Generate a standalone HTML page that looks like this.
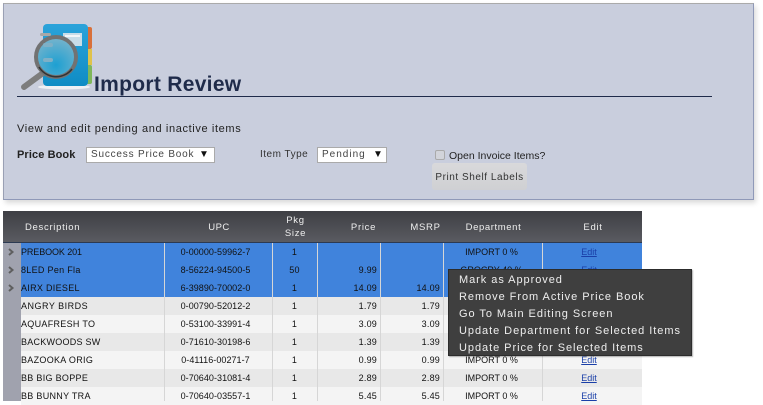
<!DOCTYPE html>
<html><head><meta charset="utf-8">
<style>
html,body{margin:0;padding:0;background:#fff;}
body{width:763px;height:401px;overflow:hidden;position:relative;font-family:"Liberation Sans",sans-serif;color:#111;}
.a{position:absolute;white-space:nowrap;}
#panel{left:3px;top:3px;width:749px;height:195px;background:#c9cedd;border:1px solid #8f99b8;border-top-color:#aaa;border-left-color:#9aa0b4;box-shadow:2px 3px 5px rgba(0,0,0,.15);}
.sel{background:#fff;border:1px solid #aaa;box-sizing:border-box;font-size:10px;letter-spacing:.8px;color:#444;line-height:14px;padding-left:4px;}
.th{color:#eee;font-size:9.5px;letter-spacing:.7px;text-align:center;}
.row{left:21px;width:621px;height:18px;}
.c{position:absolute;font-size:9px;letter-spacing:.3px;line-height:18px;color:#111;white-space:nowrap;top:0;}
.d{left:0;}
.u{left:141px;width:107px;text-align:center;letter-spacing:.05px;}
.p{left:251px;width:45px;text-align:center;}
.pr{left:297px;width:59px;text-align:right;letter-spacing:.2px;}
.m{left:360px;width:59px;text-align:right;letter-spacing:.2px;}
.de{left:421px;width:99px;text-align:center;letter-spacing:0;}
.e{left:520px;width:96px;text-align:center;color:#1a3fa8;text-decoration:underline;letter-spacing:0;}
.sep{position:absolute;top:243px;width:1px;height:158px;background:#d6d6d6;}
.menu{left:448px;top:269px;width:244px;height:87px;background:#3f3f3f;border:1px solid #2c2c2c;box-sizing:border-box;box-shadow:1px 1px 1px rgba(0,0,0,.3);}
.mi{position:absolute;left:10px;font-size:11px;letter-spacing:.95px;color:#eee;line-height:17px;white-space:nowrap;}
</style></head><body>
<div class="a" id="panel"></div>

<svg class="a" style="left:19px;top:22px" width="76" height="70" viewBox="0 0 76 70">
<defs>
<linearGradient id="bk" x1="0" y1="0" x2="0" y2="1"><stop offset="0" stop-color="#2ba3da"/><stop offset="1" stop-color="#0f8cc4"/></linearGradient>
<radialGradient id="gl" cx=".5" cy=".7" r=".7"><stop offset="0" stop-color="#1da0d2"/><stop offset="1" stop-color="#78b4cc"/></radialGradient>
</defs>
<ellipse cx="45" cy="65" rx="26" ry="2.5" fill="#eef0f4"/>
<rect x="66" y="5" width="7" height="22" rx="2" fill="#d8703a"/>
<rect x="66" y="27" width="7" height="16" fill="#dfc24a"/>
<rect x="66" y="43" width="7" height="19" rx="2" fill="#7fb75a"/>
<rect x="24" y="2" width="45" height="62" rx="4" fill="url(#bk)"/>
<rect x="44" y="11" width="19" height="13" fill="#c9dde8"/>
<rect x="46" y="13" width="15" height="2" fill="#f4f6f8"/>
<line x1="24" y1="51" x2="5" y2="65" stroke="#7d7d7d" stroke-width="6" stroke-linecap="round"/>
<circle cx="37" cy="35" r="20" fill="url(#gl)" stroke="#727272" stroke-width="4"/>
<path d="M20 45a20 20 0 0 0 33 2" fill="none" stroke="#333" stroke-width="1.5"/>
<rect x="24" y="21" width="10" height="4" rx="2" fill="#7fb0c6"/>
<rect x="24" y="36" width="10" height="4" rx="2" fill="#7fb0c6"/>
<rect x="21" y="11" width="11" height="3" rx="1.5" fill="#a8a8a8"/>
</svg>

<div class="a" style="left:94px;top:71px;font-size:21px;font-weight:bold;letter-spacing:.3px;color:#1f2b4a;line-height:27px;">Import Review</div>
<div class="a" style="left:17px;top:96px;width:695px;height:1px;background:#1f2b4a;"></div>

<div class="a" style="left:17px;top:122px;font-size:11px;letter-spacing:.63px;color:#222;line-height:14px;">View and edit pending and inactive items</div>
<div class="a" style="left:17px;top:148px;font-size:11px;font-weight:bold;letter-spacing:.1px;color:#222;line-height:14px;">Price Book</div>
<div class="a sel" style="left:86px;top:147px;width:129px;height:16px;">Success Price Book<span style="position:absolute;left:112px;top:0;color:#111;font-size:10px;letter-spacing:0">▼</span></div>
<div class="a" style="left:260px;top:148px;font-size:10px;letter-spacing:.5px;color:#333;line-height:14px;">Item Type</div>
<div class="a sel" style="left:317px;top:147px;width:70px;height:16px;letter-spacing:1px;">Pending<span style="position:absolute;left:55px;top:0;color:#111;font-size:10px;letter-spacing:0">▼</span></div>
<div class="a" style="left:435px;top:150px;width:8px;height:8px;background:#d2d4da;border:1px solid #aaa;border-radius:2px;"></div>
<div class="a" style="left:449px;top:149px;font-size:10.5px;letter-spacing:0;color:#222;line-height:14px;">Open Invoice Items?</div>
<div class="a" style="left:432px;top:163px;width:95px;height:27px;background:linear-gradient(#d9d9db,#cfd0d3);border-radius:3px;font-size:10px;letter-spacing:.55px;color:#333;line-height:29px;text-align:center;">Print Shelf Labels</div>

<div class="a" style="left:3px;top:211px;width:639px;height:31px;background:linear-gradient(#3e3f44,#5a5b61);"></div>
<div class="a" style="left:3px;top:242px;width:639px;height:1px;background:#2c3a52;"></div>
<div class="a th" style="left:25px;top:221px;line-height:13px;">Description</div>
<div class="a th" style="left:165px;top:221px;width:108px;line-height:13px;letter-spacing:.5px;">UPC</div>
<div class="a th" style="left:273px;top:214px;width:45px;line-height:13px;">Pkg<br>Size</div>
<div class="a th" style="left:336px;top:221px;width:55px;line-height:13px;">Price</div>
<div class="a th" style="left:398px;top:221px;width:55px;line-height:13px;">MSRP</div>
<div class="a th" style="left:444px;top:221px;width:99px;line-height:13px;letter-spacing:.6px;">Department</div>
<div class="a th" style="left:543px;top:221px;width:100px;line-height:13px;">Edit</div>

<div class="a" style="left:3px;top:243px;width:18px;height:158px;background:#a0a2ae;"></div>
<svg class="a" style="left:3px;top:243px" width="18" height="54" viewBox="0 0 18 54"><g fill="none" stroke="#5f5f5f" stroke-width="2"><path d="M6 6l3.5 3-3.5 3"/><path d="M6 24l3.5 3-3.5 3"/><path d="M6 42l3.5 3-3.5 3"/></g></svg>

<div class="a row" style="top:243px;background:#4083dc"><span class="c d" style="letter-spacing:-.1px">PREBOOK 201</span><span class="c u">0-00000-59962-7</span><span class="c p">1</span><span class="c de">IMPORT 0 %</span><span class="c e">Edit</span></div>
<div class="a row" style="top:261px;background:#4083dc"><span class="c d">8LED Pen Fla</span><span class="c u">8-56224-94500-5</span><span class="c p">50</span><span class="c pr">9.99</span><span class="c de">GROCRY 40 %</span><span class="c e">Edit</span></div>
<div class="a row" style="top:279px;background:#4083dc"><span class="c d">AIRX DIESEL</span><span class="c u">6-39890-70002-0</span><span class="c p">1</span><span class="c pr">14.09</span><span class="c m">14.09</span></div>
<div class="a row" style="top:297px;background:#e8e8e8"><span class="c d" style="letter-spacing:.5px">ANGRY BIRDS</span><span class="c u">0-00790-52012-2</span><span class="c p">1</span><span class="c pr">1.79</span><span class="c m">1.79</span></div>
<div class="a row" style="top:315px;background:#f4f4f4"><span class="c d">AQUAFRESH TO</span><span class="c u">0-53100-33991-4</span><span class="c p">1</span><span class="c pr">3.09</span><span class="c m">3.09</span></div>
<div class="a row" style="top:333px;background:#e8e8e8"><span class="c d" style="letter-spacing:.25px">BACKWOODS SW</span><span class="c u">0-71610-30198-6</span><span class="c p">1</span><span class="c pr">1.39</span><span class="c m">1.39</span></div>
<div class="a row" style="top:351px;background:#f4f4f4"><span class="c d">BAZOOKA ORIG</span><span class="c u">0-41116-00271-7</span><span class="c p">1</span><span class="c pr">0.99</span><span class="c m">0.99</span><span class="c de">IMPORT 0 %</span><span class="c e">Edit</span></div>
<div class="a row" style="top:369px;background:#e8e8e8"><span class="c d">BB BIG BOPPE</span><span class="c u">0-70640-31081-4</span><span class="c p">1</span><span class="c pr">2.89</span><span class="c m">2.89</span><span class="c de">IMPORT 0 %</span><span class="c e">Edit</span></div>
<div class="a row" style="top:387px;background:#f4f4f4"><span class="c d">BB BUNNY TRA</span><span class="c u">0-70640-03557-1</span><span class="c p">1</span><span class="c pr">5.45</span><span class="c m">5.45</span><span class="c de">IMPORT 0 %</span><span class="c e">Edit</span></div>

<div class="sep" style="left:164px"></div>
<div class="sep" style="left:272px"></div>
<div class="sep" style="left:317px"></div>
<div class="sep" style="left:380px"></div>
<div class="sep" style="left:443px"></div>
<div class="sep" style="left:542px"></div>

<div class="a menu">
<div class="mi" style="top:2px">Mark as Approved</div>
<div class="mi" style="top:19px">Remove From Active Price Book</div>
<div class="mi" style="top:36px">Go To Main Editing Screen</div>
<div class="mi" style="top:53px">Update Department for Selected Items</div>
<div class="mi" style="top:70px">Update Price for Selected Items</div>
</div>
</body></html>
